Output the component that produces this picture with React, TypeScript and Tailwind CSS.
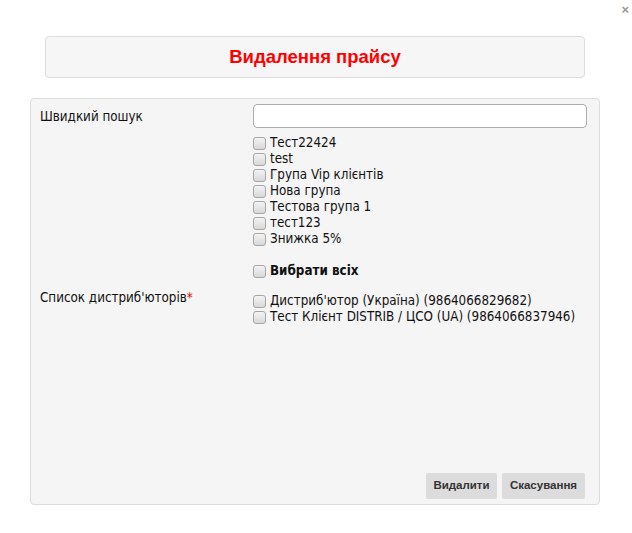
import React from 'react'

const groups = ['Тест22424', 'test', 'Група Vip клієнтів', 'Нова група', 'Тестова група 1', 'тест123', 'Знижка 5%']
const distributors = ['Дистриб\'ютор (Україна) (9864066829682)', 'Тест Клієнт DISTRIB / ЦСО (UA) (9864066837946)']

function Box() {
  return (
    <span className="inline-block w-[13px] h-[13px] shrink-0 rounded-[3px] border border-[#a6a6a6] bg-gradient-to-b from-[#f4f4f4] to-[#d8d8d8] mr-[4px]" />
  )
}

function CheckRow({ label, bold }: { label: string, bold?: boolean }) {
  return (
    <label className="flex items-center h-[16px] whitespace-nowrap">
      <Box />
      <span className={bold ? 'font-bold' : ''}>{label}</span>
    </label>
  )
}

export default function App() {
  return (
    <div className="relative w-[632px] h-[533px] bg-white text-[13.3px] text-[#111] font-['DejaVu_Sans_Condensed','DejaVu_Sans',sans-serif]">
      {/* закрити */}
      <span className="absolute right-[3px] top-[2px] text-[13px] leading-[16px] font-bold text-[#9a9a9a] font-['Liberation_Sans',sans-serif]">×</span>

      <div className="pt-[36px] pl-[45px]">
        <div className="w-[540px] h-[42px] flex items-center justify-center rounded-[4px] border border-[#dcdcdc] bg-[#f6f6f6]">
          <h1 className="text-[18.5px] font-bold text-[#ff0000] font-['Liberation_Sans',sans-serif]">Видалення прайсу</h1>
        </div>
      </div>

      <div className="ml-[30px] mt-[20px] w-[570px] h-[407px] flex flex-col rounded-[4px] border border-[#dcdcdc] bg-[#f5f5f5] pt-[5px] pl-[9px] pr-[12px] pb-[5px]">
        <div className="flex">
          <div className="w-[213px] pt-[5px] leading-[16px]">Швидкий пошук</div>
          <div className="flex-1 leading-[16px]">
            <input type="text" className="w-[334px] h-[24px] rounded-[4px] border border-[#adadad] bg-white outline-none" />
            <div className="mt-[7px]">
              {groups.map(g => <CheckRow key={g} label={g} />)}
              <div className="h-[16px]" />
              <CheckRow label="Вибрати всіх" bold />
            </div>
          </div>
        </div>

        <div className="flex mt-[11px]">
          <div className="w-[213px] leading-[16px]">
            Список дистриб'юторів<span className="text-[#e00]">*</span>
          </div>
          <div className="flex-1 pt-[3px] leading-[16px]">
            {distributors.map(d => <CheckRow key={d} label={d} />)}
          </div>
        </div>

        <div className="mt-auto flex justify-end gap-[5px] pr-[2px] font-['Liberation_Sans',sans-serif]">
          <button className="h-[26px] w-[71px] bg-[#dcdcdc] rounded-[2px] text-[11.5px] font-bold text-[#333]">Видалити</button>
          <button className="h-[26px] w-[83px] bg-[#dcdcdc] rounded-[2px] text-[11.5px] font-bold text-[#333]">Скасування</button>
        </div>
      </div>
    </div>
  )
}
